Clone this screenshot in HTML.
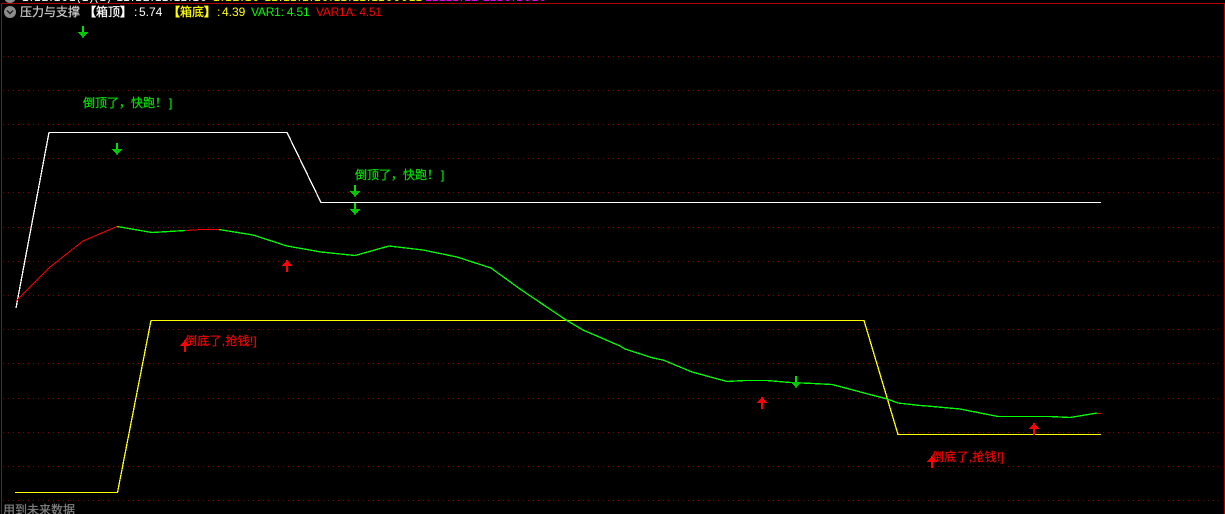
<!DOCTYPE html>
<html>
<head>
<meta charset="utf-8">
<style>
html,body{margin:0;padding:0;background:#000;width:1225px;height:514px;overflow:hidden}
#c{position:relative;width:1225px;height:514px;overflow:hidden;background:#000;font-family:"WenQuanYi Zen Hei","Liberation Sans","Noto Sans CJK SC",sans-serif;font-size:12px;line-height:14px}
#c span{position:absolute;white-space:nowrap}
.l{font-family:"Liberation Sans","WenQuanYi Zen Hei",sans-serif}
.s{-webkit-text-stroke:.25px currentColor}
.b{-webkit-text-stroke:.7px currentColor}
svg{position:absolute;left:0;top:0}
#top{position:absolute;left:0;top:0;width:1225px;height:3px;overflow:hidden}
#top span{top:-10px}
</style>
</head>
<body>
<div id="c">
<svg width="1225" height="514" viewBox="0 0 1225 514">
<g stroke="#8c0000" stroke-width="1" stroke-dasharray="1 4" shape-rendering="crispEdges">
<line x1="3" x2="1222" y1="56.5" y2="56.5"/>
<line x1="3" x2="1222" y1="90.5" y2="90.5"/>
<line x1="3" x2="1222" y1="124.5" y2="124.5"/>
<line x1="3" x2="1222" y1="158.5" y2="158.5"/>
<line x1="3" x2="1222" y1="192.5" y2="192.5"/>
<line x1="3" x2="1222" y1="227.5" y2="227.5"/>
<line x1="3" x2="1222" y1="261.5" y2="261.5"/>
<line x1="3" x2="1222" y1="295.5" y2="295.5"/>
<line x1="3" x2="1222" y1="329.5" y2="329.5"/>
<line x1="3" x2="1222" y1="363.5" y2="363.5"/>
<line x1="3" x2="1222" y1="398.5" y2="398.5"/>
<line x1="3" x2="1222" y1="432.5" y2="432.5"/>
<line x1="3" x2="1222" y1="466.5" y2="466.5"/>
<line x1="3" x2="1222" y1="500.5" y2="500.5"/>
</g>
<g shape-rendering="crispEdges">
<rect x="1" y="3" width="1223" height="1" fill="#b00000"/>
<rect x="1" y="3" width="1" height="511" fill="#b00000"/>
<rect x="1224" y="3" width="1" height="511" fill="#b00000"/>
</g>
<g fill="none" stroke-width="1.3" shape-rendering="crispEdges">
<polyline stroke="#fff" points="16,308 49,132.5 287,132.5 321,202.5 1101,202.5"/>
<polyline stroke="#ff0" points="15,492.5 117.5,492.5 151,320.5 864,320.5 898,434.5 1101,434.5"/>
<polyline stroke="#0f0" points="117,226.5 152,232.5 185,230.5"/>
<polyline stroke="#0f0" points="219,229.5 253,235 287,246 321,252 355,255.5 389,246 423,250 457,257 491,268 520,289 566,320 583,330 620,346 625,349 653,358 663,360 692,372 727,381.5 745,380.5 767,380.5 790,382.5 813,383.5 832,384.5 887,399 898,403 920,405.5 927,406 960,409 998,416.5 1050,416.5 1070,417.5 1097,413"/>
</g>
<g fill="none" stroke-width="1" shape-rendering="crispEdges">
<polyline stroke="#f00" points="16,301 50,267 83,241 117,226.5"/>
<polyline stroke="#f00" points="185,230.5 202,229.5 219,229.5"/>
<polyline stroke="#f00" points="1097,413.5 1101,413.5"/>
</g>
<defs>
<g id="d" shape-rendering="crispEdges">
<rect x="-1" y="0" width="2" height="7" fill="#00e000"/>
<path d="M-5 6H5V7H4V8H3V9H2V10H1V11H-1V10H-2V9H-3V8H-4V7H-5Z" fill="#00c800"/>
<rect x="-1" y="11" width="2" height="1" fill="#008a00"/>
</g>
<g id="u" shape-rendering="crispEdges">
<rect x="-1" y="5" width="2" height="7" fill="#f00"/>
<path d="M-5 6H5V5H4V4H3V3H2V2H1V0H-1V2H-2V3H-3V4H-4V5H-5Z" fill="#f00"/>
</g>
</defs>
<use href="#d" x="83" y="26"/>
<use href="#d" x="117" y="143"/>
<use href="#d" x="355" y="185"/>
<use href="#d" x="355" y="203"/>
<use href="#d" x="796" y="376"/>
<use href="#u" x="287" y="260"/>
<use href="#u" x="185" y="340"/>
<use href="#u" x="762" y="397"/>
<use href="#u" x="1034" y="423"/>
<use href="#u" x="932" y="456"/>
<circle cx="10" cy="12" r="6" fill="#8c8c8c"/>
<polyline points="7,10.5 10,13.5 13,10.5" fill="none" stroke="#222" stroke-width="1.4"/>
<circle cx="10" cy="-3" r="6" fill="#8c8c8c"/>
</svg>

<div id="top">
<span class="l" style="left:22px;color:#fff;letter-spacing:1px">1.12.101(1)(1) 11:12.11.11.10</span>
<span class="l" style="left:213px;color:#ff0;letter-spacing:1px">1:12.10 11.11:1.10.11.11.1100011</span>
<span class="l" style="left:425px;color:#f0f;letter-spacing:1px">11111.11 1110.1010</span>
</div>

<span class="s" style="left:20px;top:5px;color:#c8c8c8">压力与支撑</span>
<span class="s" style="left:96px;top:5px;color:#fff">箱顶</span>
<span class="b" style="left:84px;top:5px;color:#fff">【</span>
<span class="b" style="left:120px;top:5px;color:#fff">】</span>
<span class="l" style="left:134px;top:5px;color:#fff">:</span>
<span class="l" style="left:139px;top:5px;color:#fff">5.74</span>
<span class="s" style="left:180px;top:5px;color:#ff0">箱底</span>
<span class="b" style="left:168px;top:5px;color:#ff0">【</span>
<span class="b" style="left:204px;top:5px;color:#ff0">】</span>
<span class="l" style="left:217px;top:5px;color:#ff0">:</span>
<span class="l" style="left:222px;top:5px;color:#ff0">4.39</span>
<span class="l" style="left:251px;top:5px;color:#0f0;letter-spacing:-.2px">VAR1: 4.51</span>
<span class="l" style="left:316px;top:5px;color:#f00;letter-spacing:-.25px">VAR1A: 4.51</span>

<span class="s" style="left:83px;top:96px;color:#00e000">倒顶了，快跑！</span>
<span class="s" style="left:169px;top:96px;color:#00e000">]</span>
<span class="s" style="left:355px;top:168px;color:#00e000">倒顶了，快跑！</span>
<span class="s" style="left:441px;top:168px;color:#00e000">]</span>
<span class="s" style="left:185px;top:334px;color:#f00000;letter-spacing:.25px">倒底了,抢钱!]</span>
<span class="s" style="left:932px;top:450px;color:#f00000;letter-spacing:.25px">倒底了,抢钱!]</span>

<span class="s" style="left:3px;top:503px;color:#808080">用到未来数据</span>
</div>
</body>
</html>
